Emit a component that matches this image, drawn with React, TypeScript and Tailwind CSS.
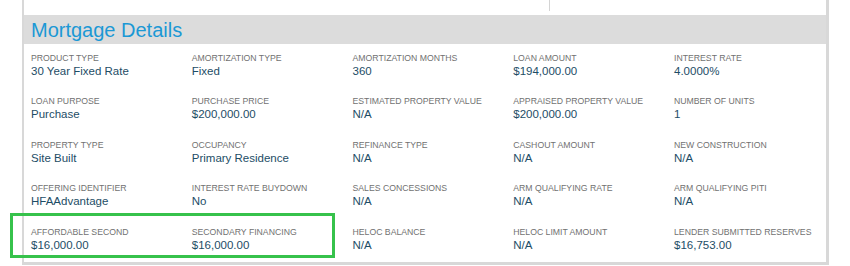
import React from "react";

const rows: [string, string][][] = [
  [
    ["PRODUCT TYPE", "30 Year Fixed Rate"],
    ["AMORTIZATION TYPE", "Fixed"],
    ["AMORTIZATION MONTHS", "360"],
    ["LOAN AMOUNT", "$194,000.00"],
    ["INTEREST RATE", "4.0000%"],
  ],
  [
    ["LOAN PURPOSE", "Purchase"],
    ["PURCHASE PRICE", "$200,000.00"],
    ["ESTIMATED PROPERTY VALUE", "N/A"],
    ["APPRAISED PROPERTY VALUE", "$200,000.00"],
    ["NUMBER OF UNITS", "1"],
  ],
  [
    ["PROPERTY TYPE", "Site Built"],
    ["OCCUPANCY", "Primary Residence"],
    ["REFINANCE TYPE", "N/A"],
    ["CASHOUT AMOUNT", "N/A"],
    ["NEW CONSTRUCTION", "N/A"],
  ],
  [
    ["OFFERING IDENTIFIER", "HFAAdvantage"],
    ["INTEREST RATE BUYDOWN", "No"],
    ["SALES CONCESSIONS", "N/A"],
    ["ARM QUALIFYING RATE", "N/A"],
    ["ARM QUALIFYING PITI", "N/A"],
  ],
  [
    ["AFFORDABLE SECOND", "$16,000.00"],
    ["SECONDARY FINANCING", "$16,000.00"],
    ["HELOC BALANCE", "N/A"],
    ["HELOC LIMIT AMOUNT", "N/A"],
    ["LENDER SUBMITTED RESERVES", "$16,753.00"],
  ],
];

export default function App() {
  return (
    <div
      className="relative w-[850px] h-[266px] bg-white overflow-hidden"
      style={{ fontFamily: '"Liberation Sans", Arial, sans-serif' }}
    >
      <div className="ml-[22px] w-[807px] border-l-[2px] border-r-[3px] border-b-[3px] border-[#d8d8d8]">
        <div className="h-[15px] flex">
          <div className="w-[526px] h-[11px] border-r border-[#d4d4d4]" />
        </div>
        <div className="h-[29px] bg-[#dcdcdc] pl-[7px] pt-[2px]">
          <h2 className="text-[20px] leading-[27px] text-[#1b98d5]">Mortgage Details</h2>
        </div>
        <div className="pl-[7px] pt-[7.5px] pb-[10px] grid grid-cols-[repeat(4,160.75px)_1fr] gap-y-[17.5px]">
          {rows.flat().map(([label, value], i) => (
            <div key={i} className="flex flex-col">
              <div className="text-[8.7px] leading-[12px] text-[#717171] whitespace-nowrap">{label}</div>
              <div className="text-[11.5px] leading-[14px] text-[#1d4d66] whitespace-nowrap">{value}</div>
            </div>
          ))}
        </div>
      </div>
      <div className="absolute left-[10px] top-[213px] w-[325px] h-[45px] border-[3px] border-[#36c24b]" />
    </div>
  );
}
